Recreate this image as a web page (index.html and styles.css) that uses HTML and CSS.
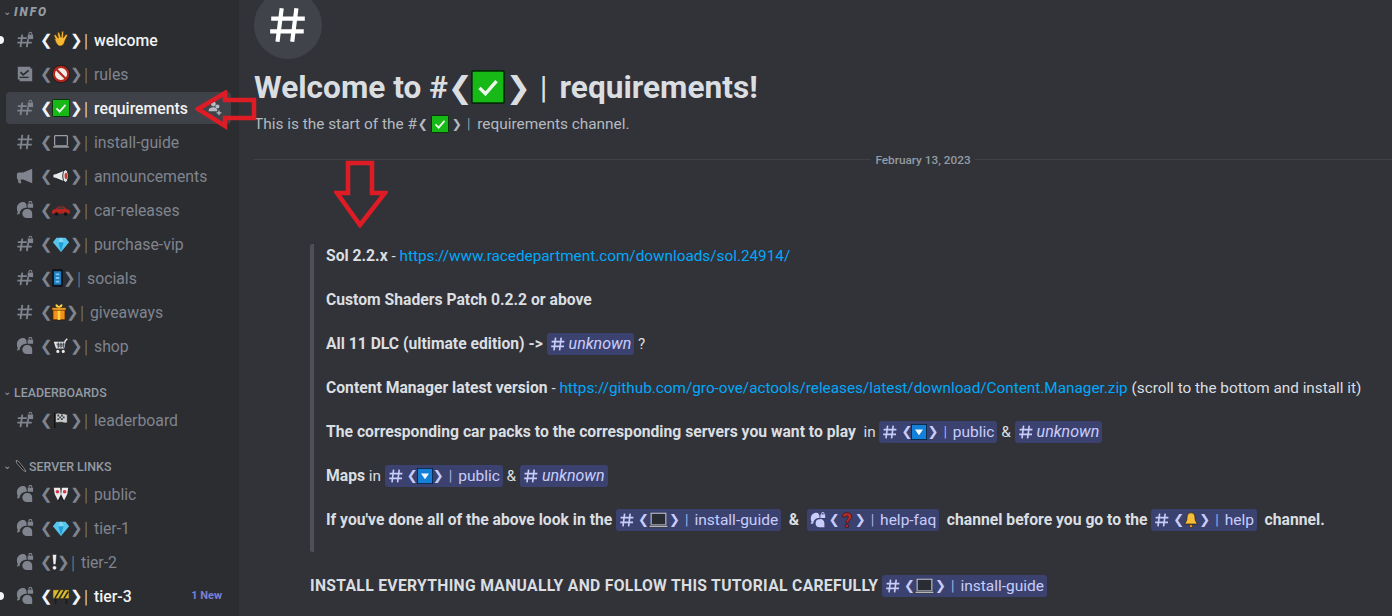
FILE: index.html
```html
<!DOCTYPE html>
<html lang="en">

<head>
  <meta charset="UTF-8" />
  <title>requirements</title>
  <link rel="stylesheet" href="styles.css">
</head>

<body>
  <!-- icon sheet -->
  <svg class="sheet" aria-hidden="true">
    <symbol id="i-hash" viewBox="0 0 20 20"><path d="M7 2 5 18M14 2l-2 16M2 7h16M1.500 13h16" fill="none" stroke="currentColor" stroke-width="2" /></symbol>
    <symbol id="i-hashlock" viewBox="0 0 20 20"><path d="M7 4 5 18M13.500 9 12 18M2 8h10M1.500 13h16" fill="none" stroke="currentColor" stroke-width="2" /><path d="M13 4h6v5h-6z" fill="currentColor" /><path d="M14.500 4V2.800a1.500 1.500 0 0 1 3 0V4" fill="none" stroke="currentColor" stroke-width="1.200" /></symbol>
    <symbol id="i-rules" viewBox="0 0 20 20"><path d="M2 2h14v2h2v14H4v-2H2z" fill="currentColor" /><path d="m5 8 3 3 6-5" fill="none" stroke="#2b2d31" stroke-width="2" /><path d="M4 13h10v1.500H4z" fill="#2b2d31" /></symbol>
    <symbol id="i-mega" viewBox="0 0 20 20"><path d="M18 2v16L8 14H5l1 4H3l-1-4a3 3 0 0 1-1-2V8a2 2 0 0 1 2-2h5z" fill="currentColor" /></symbol>
    <symbol id="i-forum" viewBox="0 0 20 20"><path d="M8 1C4 1 1 4 1 8c0 2 .5 3 1 4l-1 3 3-.5C4.500 10 7 7.500 12 7.500c0-4-1-6.500-4-6.500z" fill="currentColor" /><path d="M12 9a5 5 0 0 0-5 5 5 5 0 0 0 5 5h6v-5a5 5 0 0 0-6-5z" fill="currentColor" /><path d="M13 3h6v4.500h-6z" fill="currentColor" /><path d="M14.500 3V2a1.500 1.500 0 0 1 3 0v1" fill="none" stroke="currentColor" stroke-width="1.200" /></symbol>
    <symbol id="i-invite" viewBox="0 0 20 20"><circle cx="8" cy="5" r="3" fill="currentColor" /><circle cx="13" cy="8" r="2.500" fill="currentColor" /><path d="M2 14c0-4 3-5 6-5s5 2 5 5z" fill="currentColor" /><path d="M15 13v6M12 16h6" stroke="currentColor" stroke-width="1.600" /></symbol>

    <symbol id="e-wave" viewBox="0 0 20 20"><path d="M4 9 2 5l2-1 3 4-1-6 2-1 2 6 1-7 2 .5-.5 7 3-4 2 1-3 6c-1 5-4 7-7 6-3-2-4-6-5-9z" fill="#f7b733" stroke="#4a3308" stroke-width=".8" /></symbol>
    <symbol id="e-no" viewBox="0 0 20 20"><circle cx="10" cy="10" r="8" fill="#f3ece6" stroke="#b3261e" stroke-width="2.500" /><path d="m4.500 4.500 11 11" stroke="#b3261e" stroke-width="2.500" /><circle cx="10" cy="10" r="9.700" fill="none" stroke="#20100e" stroke-width=".6" /></symbol>
    <symbol id="e-check" viewBox="0 0 20 20"><rect x=".5" y=".5" width="19" height="19" rx="1" fill="#16b916" stroke="#06280a" /><path d="m5 10.500 3.500 3.500L15 6.500" fill="none" stroke="#f2f7ee" stroke-width="2" /></symbol>
    <symbol id="e-laptop" viewBox="0 0 20 20"><path d="M3 3h14v11H3z" fill="#2a2c33" stroke="#c4c7cc" /><path d="M1 14.500h18v2H1z" fill="#c9ccd1" stroke="#14151a" stroke-width=".6" /></symbol>
    <symbol id="e-mega" viewBox="0 0 20 20"><path d="M1 8v4l3 .5L15 17V3L4 7.500z" fill="#e6e8ea" stroke="#15161a" /><ellipse cx="15" cy="10" rx="3" ry="7" fill="#e6e8ea" stroke="#15161a" /><ellipse cx="15.500" cy="10" rx="1.500" ry="3.500" fill="#c23b2e" /></symbol>
    <symbol id="e-car" viewBox="0 0 20 20"><path d="M0 12c0-2 2-2.500 4-3l3-3h6l3 3c2 .3 4 1 4 3v2H0z" fill="#b5261f" /><path d="M7.500 7h5l1.500 2H6z" fill="#3a3c42" /><circle cx="5" cy="14.500" r="2" fill="#151518" /><circle cx="15" cy="14.500" r="2" fill="#151518" /></symbol>
    <symbol id="e-gem" viewBox="0 0 20 20"><path d="M5 3h10l4 5-9 11L1 8z" fill="#56c6ee" /><path d="M1 8h18M7 8l3 11 3-11-2-5H9z" fill="#9ce3f7" fill-opacity=".6" /><path d="M10 19 7 8h6z" fill="#1f9ed3" /></symbol>
    <symbol id="e-phone" viewBox="0 0 12 20"><rect width="12" height="20" rx="1.500" fill="#10161c" /><rect x="2" y="2.500" width="8" height="15" fill="#1e7fc0" /><path d="M4 5h4v2H4zm0 4h4v2H4zm0 4h4v2H4z" fill="#7fc4ef" /></symbol>
    <symbol id="e-gift" viewBox="0 0 16 20"><path d="M1 7h14v12H1z" fill="#f48f18" stroke="#3a1d04" /><path d="M6.500 3h3v16h-3z" fill="#f9d24a" /><path d="M0 5h16v3H0z" fill="#f6a425" stroke="#3a1d04" stroke-width=".7" /><path d="M8 5C4 5 3 1 5 1s3 4 3 4 1-4 3-4 1 4-3 4z" fill="#f9d24a" /></symbol>
    <symbol id="e-cart" viewBox="0 0 20 20"><path d="M17 2 14.500 4.500 13 12H5L3 6h11" fill="#d9dcdf" stroke="#e6e8ea" stroke-width="1.500" /><path d="M5 8h9M6 10h7M7 6v6M10 6v6M13 6v6" stroke="#35373c" /><circle cx="6.500" cy="16" r="1.700" fill="#e6e8ea" /><circle cx="12.500" cy="16" r="1.700" fill="#e6e8ea" /></symbol>
    <symbol id="e-flag" viewBox="0 0 20 20"><path d="M3 2v17" stroke="#10110f" stroke-width="1.500" /><path d="M4 3c4-2 6 1 9 0l4 1v9c-3 1-5-1-8-.5L4 13z" fill="#c9cbcd" stroke="#20211f" stroke-width=".7" /><path d="M6 4h2v2H6zm4 0h2v2h-2zm-2 2h2v2H8zm4 0h2v2h-2zM6 8h2v2H6zm4 0h2v2h-2z" fill="#404246" /></symbol>
    <symbol id="e-eyes" viewBox="0 0 20 20"><path d="M2 3h7l1 9-3 6-4-8z" fill="#eceaea" /><path d="M18 3h-7l-1 9 3 6 4-8z" fill="#eceaea" /><circle cx="6" cy="7.500" r="2" fill="#d6314a" /><circle cx="14" cy="7.500" r="2" fill="#d6314a" /><path d="m7 18 3-6 3 6" fill="none" stroke="#17171a" stroke-width="1.500" /></symbol>
    <symbol id="e-excl" viewBox="0 0 6 20"><path d="M.5 1h5l-1 12h-3z" fill="#f0f0f0" stroke="#111" stroke-width=".5" /><circle cx="3" cy="17" r="2.500" fill="#f0f0f0" stroke="#111" stroke-width=".5" /></symbol>
    <symbol id="e-cons" viewBox="0 0 20 20"><path d="M4 13v6M16 13v6" stroke="#1c1c1c" stroke-width="2" /><path d="M1 3h18v10H1z" fill="#d9ba2f" stroke="#1c1c1c" stroke-width=".7" /><path d="m3 13 6-10M8 13l6-10M13 13l5-8" stroke="#2a2a24" stroke-width="1.800" /></symbol>
    <symbol id="e-down" viewBox="0 0 20 20"><rect x=".5" y=".5" width="19" height="19" fill="#1580d8" stroke="#06223c" /><path d="M5 7h10l-5 7z" fill="#f4f8fb" /></symbol>
    <symbol id="e-quest" viewBox="0 0 20 20"><path d="M4 6c0-7 12-7 12 0 0 3-4 3.500-4 7.500H8.500C8.500 9 12 8.500 11.500 6c-.3-2-3-2-3.300.5z" fill="#b32b2b" stroke="#160505" stroke-width=".6" /><circle cx="10" cy="17.500" r="2.200" fill="#b32b2b" stroke="#160505" stroke-width=".6" /></symbol>
    <symbol id="e-bell" viewBox="0 0 20 20"><path d="M10 1c-4 0-5 3-5 7 0 3-2 5-3 7h16c-1-2-3-4-3-7 0-4-1-7-5-7z" fill="#f6bd3b" stroke="#2a1a02" stroke-width=".8" /><circle cx="10" cy="17.500" r="2" fill="#e5992a" stroke="#2a1a02" stroke-width=".6" /></symbol>
    <symbol id="e-pin" viewBox="0 0 20 20"><path d="m3 2 3 1 9 11 2 4-4-2L4 6z" fill="#1a1b1e" stroke="#b9bcc1" stroke-width=".9" /></symbol>
  </svg>

  <div class="app">
    <!-- channel list -->
    <nav class="sidebar">
      <div class="cat cat-info"><span class="caret">⌄</span><span class="cat-name">INFO</span></div>
      <a class="row unread"><svg class="ic"><use href="#i-hashlock" /></svg><span class="br">❮</span><svg class="em"><use href="#e-wave" /></svg><span class="br">❯</span><span class="bar">|</span><span class="nm">welcome</span></a>
      <a class="row"><svg class="ic"><use href="#i-rules" /></svg><span class="br">❮</span><svg class="em"><use href="#e-no" /></svg><span class="br">❯</span><span class="bar">|</span><span class="nm">rules</span></a>
      <a class="row active"><svg class="ic"><use href="#i-hashlock" /></svg><span class="br">❮</span><svg class="em"><use href="#e-check" /></svg><span class="br">❯</span><span class="bar">|</span><span class="nm">requirements</span><svg class="invite"><use href="#i-invite" /></svg></a>
      <a class="row"><svg class="ic"><use href="#i-hash" /></svg><span class="br">❮</span><svg class="em"><use href="#e-laptop" /></svg><span class="br">❯</span><span class="bar">|</span><span class="nm">install-guide</span></a>
      <a class="row"><svg class="ic"><use href="#i-mega" /></svg><span class="br">❮</span><svg class="em"><use href="#e-mega" /></svg><span class="br">❯</span><span class="bar">|</span><span class="nm">announcements</span></a>
      <a class="row"><svg class="ic"><use href="#i-forum" /></svg><span class="br">❮</span><svg class="em"><use href="#e-car" /></svg><span class="br">❯</span><span class="bar">|</span><span class="nm">car-releases</span></a>
      <a class="row"><svg class="ic"><use href="#i-hashlock" /></svg><span class="br">❮</span><svg class="em"><use href="#e-gem" /></svg><span class="br">❯</span><span class="bar">|</span><span class="nm">purchase-vip</span></a>
      <a class="row"><svg class="ic"><use href="#i-hashlock" /></svg><span class="br">❮</span><svg class="em em-thin"><use href="#e-phone" /></svg><span class="br">❯</span><span class="bar">|</span><span class="nm">socials</span></a>
      <a class="row"><svg class="ic"><use href="#i-hash" /></svg><span class="br">❮</span><svg class="em em-gift"><use href="#e-gift" /></svg><span class="br">❯</span><span class="bar">|</span><span class="nm">giveaways</span></a>
      <a class="row"><svg class="ic"><use href="#i-forum" /></svg><span class="br">❮</span><svg class="em"><use href="#e-cart" /></svg><span class="br">❯</span><span class="bar">|</span><span class="nm">shop</span></a>

      <div class="cat cat-gap"><span class="caret">⌄</span><span class="cat-name">LEADERBOARDS</span></div>
      <a class="row"><svg class="ic"><use href="#i-hashlock" /></svg><span class="br">❮</span><svg class="em"><use href="#e-flag" /></svg><span class="br">❯</span><span class="bar">|</span><span class="nm">leaderboard</span></a>

      <div class="cat cat-gap"><span class="caret">⌄</span><svg class="cat-pin"><use href="#e-pin" /></svg><span class="cat-name">SERVER LINKS</span></div>
      <a class="row"><svg class="ic"><use href="#i-forum" /></svg><span class="br">❮</span><svg class="em"><use href="#e-eyes" /></svg><span class="br">❯</span><span class="bar">|</span><span class="nm">public</span></a>
      <a class="row"><svg class="ic"><use href="#i-forum" /></svg><span class="br">❮</span><svg class="em"><use href="#e-gem" /></svg><span class="br">❯</span><span class="bar">|</span><span class="nm">tier-1</span></a>
      <a class="row"><svg class="ic"><use href="#i-forum" /></svg><span class="br">❮</span><svg class="em em-excl"><use href="#e-excl" /></svg><span class="br">❯</span><span class="bar">|</span><span class="nm">tier-2</span></a>
      <a class="row unread"><svg class="ic"><use href="#i-forum" /></svg><span class="br">❮</span><svg class="em"><use href="#e-cons" /></svg><span class="br">❯</span><span class="bar">|</span><span class="nm">tier-3</span><span class="new">1 New</span></a>
    </nav>

    <!-- chat -->
    <main class="chat">
      <div class="avatar"><svg><use href="#i-hash" /></svg></div>
      <h1 class="title">Welcome to #<span class="br-lg">❮</span><svg class="em-lg"><use href="#e-check" /></svg><span class="br-lg">❯</span><span class="bar-lg">|</span>requirements!</h1>
      <p class="sub">This is the start of the #<span class="br-sm">❮</span><svg class="em-sm"><use href="#e-check" /></svg><span class="br-sm">❯</span><span class="bar-sm">|</span>requirements channel.</p>
      <div class="date"><span>February 13, 2023</span></div>

      <blockquote class="quote">
        <p><b>Sol 2.2.x</b> - <a class="link">https://www.racedepartment.com/downloads/sol.24914/</a></p>
        <p><b>Custom Shaders Patch 0.2.2 or above</b></p>
        <p><b>All 11 DLC (ultimate edition) -&gt;</b> <span class="men"><svg class="mh"><use href="#i-hash" /></svg><i>unknown</i></span> ?</p>
        <p><b>Content Manager latest version</b> - <a class="link">https://github.com/gro-ove/actools/releases/latest/download/Content.Manager.zip</a> (scroll to the bottom and install it)</p>
        <p><b>The corresponding car packs to the corresponding servers you want to play</b>&nbsp; in <span class="men"><svg class="mh"><use href="#i-hash" /></svg><span class="mb">❮</span><svg class="me"><use href="#e-down" /></svg><span class="mb">❯</span><span class="mbar">|</span>public</span> &amp; <span class="men"><svg class="mh"><use href="#i-hash" /></svg><i>unknown</i></span></p>
        <p><b>Maps</b> in <span class="men"><svg class="mh"><use href="#i-hash" /></svg><span class="mb">❮</span><svg class="me"><use href="#e-down" /></svg><span class="mb">❯</span><span class="mbar">|</span>public</span> &amp; <span class="men"><svg class="mh"><use href="#i-hash" /></svg><i>unknown</i></span></p>
        <p><b>If you've done all of the above look in the</b> <span class="men"><svg class="mh"><use href="#i-hash" /></svg><span class="mb">❮</span><svg class="me me-wide"><use href="#e-laptop" /></svg><span class="mb">❯</span><span class="mbar">|</span>install-guide</span> &nbsp;<b>&amp;</b>&nbsp; <span class="men"><svg class="mh"><use href="#i-forum" /></svg><span class="mb">❮</span><svg class="me"><use href="#e-quest" /></svg><span class="mb">❯</span><span class="mbar">|</span>help-faq</span> &nbsp;<b>channel before you go to the</b> <span class="men"><svg class="mh"><use href="#i-hash" /></svg><span class="mb">❮</span><svg class="me"><use href="#e-bell" /></svg><span class="mb">❯</span><span class="mbar">|</span>help</span> &nbsp;<b>channel.</b></p>
      </blockquote>

      <p class="last"><b>INSTALL EVERYTHING MANUALLY AND FOLLOW THIS TUTORIAL CAREFULLY</b> <span class="men"><svg class="mh"><use href="#i-hash" /></svg><span class="mb">❮</span><svg class="me me-wide"><use href="#e-laptop" /></svg><span class="mb">❯</span><span class="mbar">|</span>install-guide</span></p>
    </main>
  </div>

  <!-- red annotation arrows -->
  <svg class="arrow arrow-left" viewBox="0 0 62 40"><path d="M3 19 30 3v7h29v18H30v8z" /></svg>
  <svg class="arrow arrow-down" viewBox="0 0 54 68"><path d="M14 3h24v30h13L26 65 3 33h11z" /></svg>
</body>

</html>
```

FILE: styles.css
```css
* {
  margin: 0;
  padding: 0;
  box-sizing: border-box;
}

html,
body {
  height: 616px;
  overflow: hidden;
}

body {
  font-family: Roboto, "Noto Sans", sans-serif;
  background: #313338;
  color: #dbdee1;
}

.sheet {
  display: none;
}

.app {
  display: flex;
  height: 616px;
}

/* sidebar */
.sidebar {
  width: 239px;
  flex: none;
  background: #2b2d31;
  padding: 0 8px 0 6px;
}

.cat {
  display: flex;
  align-items: center;
  height: 16px;
  margin-bottom: 4px;
  color: #949ba4;
  font-size: 12.400px;
  font-weight: 500;
}

.cat-info {
  margin-top: 4px;
  font-size: 12px;
  font-weight: 900;
  font-style: italic;
  letter-spacing: 2px;
}

.cat-gap {
  margin-top: 22px;
}

.caret {
  width: 8px;
  margin-left: -3px;
  margin-right: 3px;
  font-size: 10px;
  line-height: 8px;
  font-style: normal;
  letter-spacing: 0;
  font-weight: 400;
}

.cat-pin {
  width: 14px;
  height: 14px;
  margin-right: 1px;
}

.row {
  position: relative;
  display: flex;
  align-items: center;
  height: 32px;
  margin-bottom: 2px;
  padding-left: 10px;
  border-radius: 4px;
  color: #80848e;
  font-size: 15.800px;
  white-space: nowrap;
}

.row.active {
  background: #404249;
  color: #f2f3f5;
}

.row.unread {
  color: #f2f3f5;
}

.row.unread::before {
  content: "";
  position: absolute;
  left: -10px;
  top: 12px;
  width: 8px;
  height: 8px;
  border-radius: 0 4px 4px 0;
  background: #f2f3f5;
}

.ic {
  width: 18px;
  height: 18px;
  margin-right: 6px;
  flex: none;
  color: #80848e;
}

.br {
  width: 11px;
  font-family: "DejaVu Sans", sans-serif;
  font-size: 15px;
  font-weight: 700;
  text-align: center;
}

.em {
  width: 18px;
  height: 18px;
  flex: none;
  margin: 0 .5px;
}

.em-thin {
  width: 11px;
}

.em-gift {
  width: 14px;
}

.em-excl {
  width: 5px;
}

.bar {
  margin: 0 6px 0 3px;
  font-size: 18px;
  font-weight: 300;
}

.row.active .nm,
.row.unread .nm {
  font-weight: 500;
}

.invite {
  position: absolute;
  right: 8px;
  top: 8px;
  width: 16px;
  height: 16px;
  color: #b5bac1;
}

.new {
  position: absolute;
  right: 9px;
  top: 9px;
  color: #7a80d8;
  font-size: 11px;
  font-weight: 700;
}

/* chat */
.chat {
  flex: 1;
  min-width: 0;
  padding-left: 15px;
  white-space: nowrap;
}

.avatar {
  display: flex;
  align-items: center;
  justify-content: center;
  width: 68px;
  height: 68px;
  margin-top: -9px;
  border-radius: 50%;
  background: #41434a;
  color: #fff;
}

.avatar svg {
  width: 42px;
  height: 42px;
}

.title {
  display: flex;
  align-items: center;
  height: 44px;
  margin-top: 6px;
  color: #dbdee1;
  font-size: 31.600px;
  font-weight: 700;
}

.br-lg {
  width: 22px;
  font-family: "DejaVu Sans", sans-serif;
  font-size: 30px;
  text-align: center;
}

.em-lg {
  width: 34px;
  height: 34px;
  margin: 0 1px;
}

.bar-lg {
  margin: 0 12px;
  font-weight: 400;
}

.sub {
  display: flex;
  align-items: center;
  height: 24px;
  margin-top: 3px;
  color: #b5bac1;
  font-size: 15.400px;
}

.br-sm {
  width: 12px;
  font-family: "DejaVu Sans", sans-serif;
  font-size: 12px;
  font-weight: 700;
  text-align: center;
}

.em-sm {
  width: 18px;
  height: 18px;
  margin: 0 2px;
}

.bar-sm {
  margin: 0 7px 0 4px;
  font-weight: 300;
}

.date {
  display: flex;
  align-items: center;
  justify-content: center;
  margin-top: 23px;
  height: 1px;
  padding-left: 200px;
  background: #3f4147;
}

.date span {
  padding: 0 4px;
  background: #313338;
  color: #949ba4;
  font-size: 11.800px;
  font-weight: 500;
  line-height: 14px;
}

.quote {
  margin-top: 84px;
  margin-left: 56px;
  height: 308px;
  padding-top: 1px;
  padding-left: 12px;
  border-left: 4px solid #4e5058;
  border-radius: 2px;
  font-size: 15.300px;
  line-height: 22px;
}

.quote p {
  height: 22px;
  margin-bottom: 22px;
}

b {
  font-size: 15.700px;
  font-weight: 700;
}

.link {
  color: #00a8fc;
}

.men {
  display: inline-flex;
  align-items: center;
  height: 22px;
  padding: 0 3px;
  vertical-align: top;
  border-radius: 3px;
  background: #3c4270;
  color: #c9cdfb;
  font-size: 15.500px;
}

.men i {
  font-size: 16px;
}

.mh {
  width: 16px;
  height: 16px;
  margin-right: 3px;
}

.mb {
  width: 10px;
  font-family: "DejaVu Sans", sans-serif;
  font-size: 13px;
  font-weight: 700;
  text-align: center;
}

.me {
  width: 16px;
  height: 16px;
}

.me-wide {
  width: 21px;
  height: 21px;
}

.mbar {
  margin: 0 6px 0 6px;
  font-weight: 300;
}

.last {
  height: 22px;
  margin-top: 23px;
  margin-left: 56px;
  font-size: 15.300px;
  line-height: 22px;
}

.last b {
  letter-spacing: .32px;
}

/* annotation */
.arrow {
  position: absolute;
  fill: none;
  stroke: #dd1c25;
  stroke-width: 4.500;
}

.arrow-left {
  left: 195px;
  top: 90px;
  width: 62px;
  height: 40px;
}

.arrow-down {
  left: 334px;
  top: 160px;
  width: 54px;
  height: 68px;
}
```
